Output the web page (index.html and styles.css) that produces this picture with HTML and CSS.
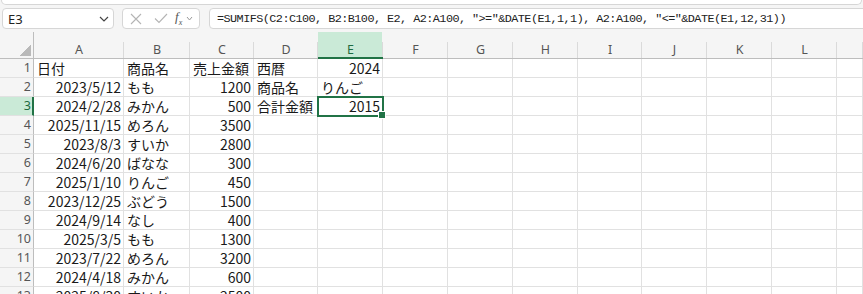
FILE: index.html
```html
<!DOCTYPE html>
<html lang="ja">

<head>
    <meta charset="UTF-8">
    <meta name="viewport" content="width=device-width, initial-scale=1.0">
    <title>Sheet1</title>
    <link rel="stylesheet" href="styles.css">
</head>

<body>
    <div class="toolbar">
        <div class="ribbon-edge"></div>
        <div class="formula-row">
            <div class="name-box">
                <span>E3</span>
                <svg width="10" height="6" viewBox="0 0 10 6"><polyline points="1,1 5,5 9,1" fill="none" stroke="#444" stroke-width="1.2"/></svg>
            </div>
            <div class="func-box">
                <svg class="icon-x" width="12" height="12" viewBox="0 0 12 12"><path d="M1 1 L11 11 M11 1 L1 11" stroke="#b4b4b4" stroke-width="1.1" fill="none"/></svg>
                <svg class="icon-check" width="14" height="11" viewBox="0 0 14 11"><polyline points="1,5.5 5,9.5 13,1" fill="none" stroke="#b4b4b4" stroke-width="1.1"/></svg>
                <span class="fx">f<sub>x</sub></span>
                <svg width="7" height="5" viewBox="0 0 7 5"><polyline points="1,1 3.5,4 6,1" fill="none" stroke="#999" stroke-width="1"/></svg>
            </div>
            <div class="formula-box">=SUMIFS(C2:C100, B2:B100, E2, A2:A100, "&gt;="&amp;DATE(E1,1,1), A2:A100, "&lt;="&amp;DATE(E1,12,31))</div>
        </div>
    </div>

    <div class="sheet" id="sheet"></div>

    <script>
        // 列と行のデータ
        const columns = ['A', 'B', 'C', 'D', 'E', 'F', 'G', 'H', 'I', 'J', 'K', 'L', ''];
        const rows = [
            ['日付', '商品名', '売上金額', '西暦', 2024],
            ['2023/5/12', 'もも', 1200, '商品名', 'りんご'],
            ['2024/2/28', 'みかん', 500, '合計金額', 2015],
            ['2025/11/15', 'めろん', 3500],
            ['2023/8/3', 'すいか', 2800],
            ['2024/6/20', 'ばなな', 300],
            ['2025/1/10', 'りんご', 450],
            ['2023/12/25', 'ぶどう', 1500],
            ['2024/9/14', 'なし', 400],
            ['2025/3/5', 'もも', 1300],
            ['2023/7/22', 'めろん', 3200],
            ['2024/4/18', 'みかん', 600],
            ['2025/8/30', 'すいか', 2500]
        ];

        const sheet = document.getElementById('sheet');

        function addCell(className, text) {
            const cell = document.createElement('div');
            cell.className = className;
            cell.textContent = text;
            sheet.appendChild(cell);
            return cell;
        }

        addCell('corner', '');
        columns.forEach((col) => {
            addCell(col === 'E' ? 'col-head active' : 'col-head', col);
        });

        rows.forEach((row, r) => {
            addCell(r === 2 ? 'row-head active' : 'row-head', r + 1);
            columns.forEach((col, c) => {
                const value = row[c];
                let cls = 'cell';
                // 日付と数値は右寄せ
                if (typeof value === 'number' || (r > 0 && c === 0)) cls += ' num';
                if (r === 2 && c === 4) cls += ' selected';
                addCell(cls, value === undefined ? '' : value);
            });
        });
    </script>
</body>

</html>
```

FILE: styles.css
```css
* {
    margin: 0;
    padding: 0;
    box-sizing: border-box;
}

body {
    font-family: "Noto Sans CJK JP", "Noto Sans", sans-serif;
    background-color: #f5f5f5;
    overflow: hidden;
    width: 863px;
    height: 294px;
}

.toolbar {
    height: 32px;
}

.ribbon-edge {
    height: 5px;
    margin: 0 1px;
    background-color: #fff;
    border: 1px solid #d6d6d6;
    border-top: none;
    border-radius: 0 0 6px 6px;
}

.formula-row {
    display: flex;
    margin-top: 3px;
    padding-left: 2px;
    gap: 8px;
}

.name-box,
.func-box,
.formula-box {
    height: 21px;
    background-color: #fff;
    border: 1px solid #d6d6d6;
    border-radius: 4px;
    display: flex;
    align-items: center;
}

.name-box {
    width: 112px;
    justify-content: space-between;
    padding: 0 4px 0 5px;
    font-family: "Noto Sans", sans-serif;
    font-size: 13px;
    color: #222;
}

.func-box {
    width: 78px;
    padding-left: 7px;
}

.icon-x {
    margin-right: 12px;
}

.icon-check {
    margin-right: 7px;
}

.fx {
    font-family: "Liberation Serif", serif;
    font-style: italic;
    font-size: 13px;
    color: #555;
    margin-right: 4px;
    line-height: 1;
}

.fx sub {
    font-size: 8px;
}

.formula-box {
    flex: 1;
    margin-left: 1px;
    margin-right: -12px;
    padding-left: 7px;
    font-family: "Liberation Mono", monospace;
    font-size: 11.8px;
    letter-spacing: -0.54px;
    color: #222;
    white-space: nowrap;
}

.sheet {
    display: grid;
    grid-template-columns: 34px 90px 66px 64px 64px 65px 65px 65px 65px 64px 65px 65px 65px 1fr;
    grid-template-rows: 27px;
    grid-auto-rows: 19px;
    background-color: #fff;
}

.corner {
    position: relative;
    background-color: #f5f5f5;
    border-right: 1px solid #bdbdbd;
    border-bottom: 1px solid #bdbdbd;
}

.corner::after {
    content: "";
    position: absolute;
    right: 2px;
    bottom: 2px;
    width: 11px;
    height: 11px;
    background: linear-gradient(to bottom right, transparent 50%, #b9b9b9 50%);
}

.col-head {
    position: relative;
    border-bottom: 1px solid #bdbdbd;
    padding-top: 10px;
    font-family: "Noto Sans", sans-serif;
    font-size: 12.5px;
    line-height: 16px;
    color: #555;
    text-align: center;
    background-color: #dadada;
    background-image: linear-gradient(#f5f5f5, #f5f5f5);
    background-size: calc(100% - 1px) 100%;
    background-repeat: no-repeat;
}

/* separator lines start below the gap */
.col-head::before {
    content: "";
    position: absolute;
    top: 0;
    right: 0;
    width: 1px;
    height: 10px;
    background-color: #f5f5f5;
}

.col-head.active {
    background-image: linear-gradient(#caead7, #caead7);
    border-bottom: 2px solid #217346;
    color: #1e6b41;
    line-height: 15px;
}

.row-head {
    background-color: #f5f5f5;
    border-right: 1px solid #bdbdbd;
    border-bottom: 1px solid #e1e1e1;
    padding-right: 2px;
    font-family: "Noto Sans", sans-serif;
    font-size: 12.5px;
    line-height: 18px;
    color: #555;
    text-align: right;
}

.row-head.active {
    background-color: #caead7;
    border-right: 2px solid #217346;
    padding-right: 1px;
    color: #1e6b41;
}

.cell {
    border-right: 1px solid #e1e1e1;
    border-bottom: 1px solid #e1e1e1;
    padding: 0 2px 0 3px;
    font-size: 14px;
    line-height: 19px;
    color: #1a1a1a;
    white-space: nowrap;
}

.num {
    text-align: right;
}

.selected {
    position: relative;
    outline: 2px solid #217346;
    outline-offset: -1px;
    z-index: 1;
}

.selected::after {
    content: "";
    position: absolute;
    right: -4px;
    bottom: -4px;
    width: 6px;
    height: 6px;
    background-color: #217346;
    border: 1px solid #fff;
}
```
